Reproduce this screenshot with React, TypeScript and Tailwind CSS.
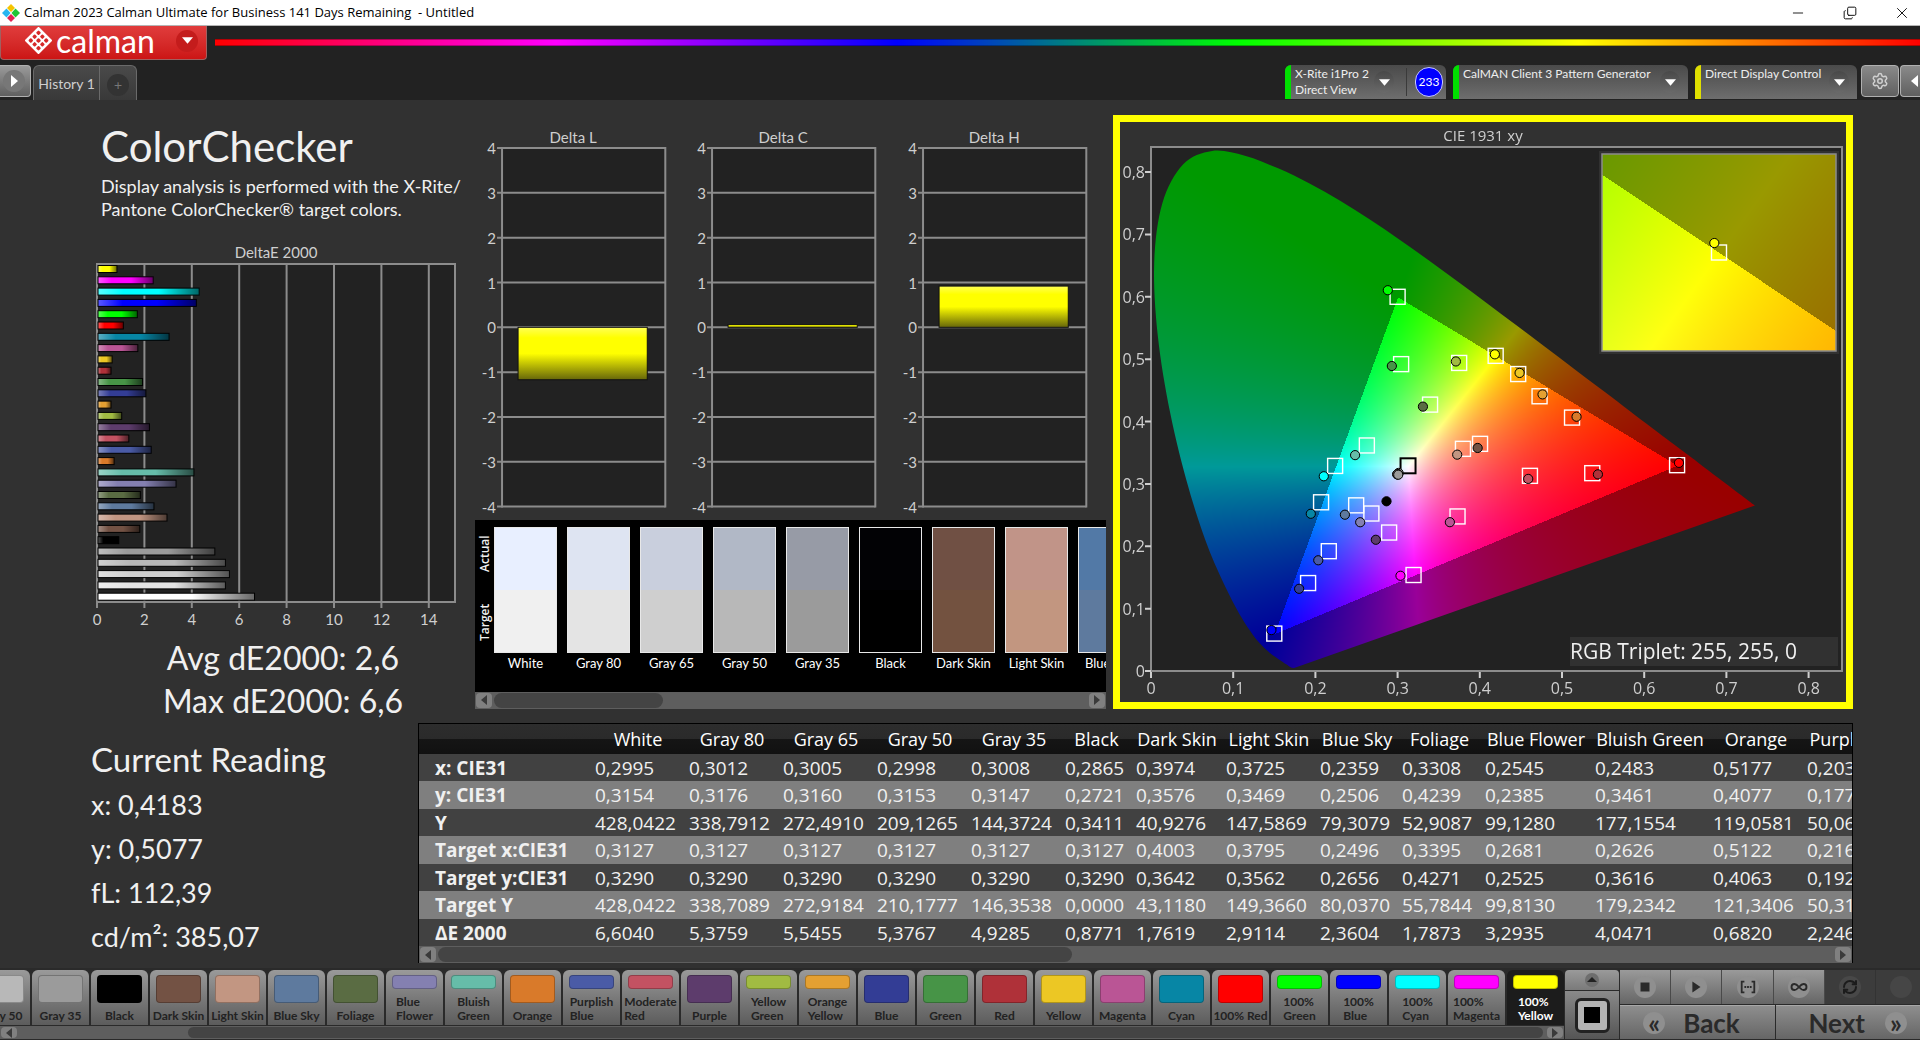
import { useEffect, useRef } from 'react';
import type { ReactNode } from 'react';
import { Minus, X, Copy, Settings, RefreshCw, Infinity as InfinityIcon } from 'lucide-react';

interface Patch {
  name: string;
  color: string;
  dE: number;
  actual: [number, number];
  target: [number, number];
}

const patches: Patch[] = [
  { name: 'White', color: '#ffffff', dE: 6.604, actual: [0.2995, 0.3154], target: [0.3127, 0.329] },
  { name: 'Gray 80', color: '#e4e4e4', dE: 5.3759, actual: [0.3012, 0.3176], target: [0.3127, 0.329] },
  { name: 'Gray 65', color: '#cfcfcf', dE: 5.5455, actual: [0.3005, 0.316], target: [0.3127, 0.329] },
  { name: 'Gray 50', color: '#b8b8b8', dE: 5.3767, actual: [0.2998, 0.3153], target: [0.3127, 0.329] },
  { name: 'Gray 35', color: '#9b9b9b', dE: 4.9285, actual: [0.3008, 0.3147], target: [0.3127, 0.329] },
  { name: 'Black', color: '#000000', dE: 0.8771, actual: [0.2865, 0.2721], target: [0.3127, 0.329] },
  { name: 'Dark Skin', color: '#735244', dE: 1.7619, actual: [0.3974, 0.3576], target: [0.4003, 0.3642] },
  { name: 'Light Skin', color: '#c29682', dE: 2.9114, actual: [0.3725, 0.3469], target: [0.3795, 0.3562] },
  { name: 'Blue Sky', color: '#5e7a9e', dE: 2.3604, actual: [0.2359, 0.2506], target: [0.2496, 0.2656] },
  { name: 'Foliage', color: '#5a6c43', dE: 1.7873, actual: [0.3308, 0.4239], target: [0.3395, 0.4271] },
  { name: 'Blue Flower', color: '#8480b1', dE: 3.2935, actual: [0.2545, 0.2385], target: [0.2681, 0.2525] },
  { name: 'Bluish Green', color: '#66bda9', dE: 4.0471, actual: [0.2483, 0.3461], target: [0.2626, 0.3616] },
  { name: 'Orange', color: '#d97a2a', dE: 0.682, actual: [0.5177, 0.4077], target: [0.5122, 0.4063] },
  { name: 'Purplish Blue', color: '#4a5ba6', dE: 2.246, actual: [0.2035, 0.1775], target: [0.2163, 0.1921] },
  { name: 'Moderate Red', color: '#c35262', dE: 1.3, actual: [0.4589, 0.308], target: [0.461, 0.3129] },
  { name: 'Purple', color: '#5d3c6c', dE: 2.17, actual: [0.2735, 0.2104], target: [0.2897, 0.222] },
  { name: 'Yellow Green', color: '#a1bb42', dE: 1.0, actual: [0.3709, 0.4963], target: [0.3749, 0.4939] },
  { name: 'Orange Yellow', color: '#e4a032', dE: 0.55, actual: [0.4763, 0.4435], target: [0.4727, 0.4405] },
  { name: 'Blue', color: '#333d95', dE: 2.02, actual: [0.1802, 0.1318], target: [0.1911, 0.141] },
  { name: 'Green', color: '#479447', dE: 1.88, actual: [0.293, 0.489], target: [0.3043, 0.492] },
  { name: 'Red', color: '#af3139', dE: 0.55, actual: [0.5437, 0.3153], target: [0.5368, 0.3172] },
  { name: 'Yellow', color: '#ecc724', dE: 0.6, actual: [0.4484, 0.4779], target: [0.4467, 0.4761] },
  { name: 'Magenta', color: '#ba5595', dE: 1.68, actual: [0.3636, 0.2386], target: [0.3729, 0.2478] },
  { name: 'Cyan', color: '#0786a5', dE: 3.0, actual: [0.1944, 0.2521], target: [0.2069, 0.2705] },
  { name: '100% Red', color: '#ff0000', dE: 1.07, actual: [0.6423, 0.3337], target: [0.64, 0.33] },
  { name: '100% Green', color: '#00ff00', dE: 1.66, actual: [0.2881, 0.6105], target: [0.3, 0.6] },
  { name: '100% Blue', color: '#0000ff', dE: 4.15, actual: [0.1465, 0.0656], target: [0.15, 0.06] },
  { name: '100% Cyan', color: '#00ffff', dE: 4.27, actual: [0.2102, 0.3122], target: [0.224, 0.3288] },
  { name: '100% Magenta', color: '#ff00ff', dE: 2.33, actual: [0.3035, 0.1527], target: [0.3194, 0.1539] },
  { name: '100% Yellow', color: '#ffff00', dE: 0.8, actual: [0.4183, 0.5077], target: [0.4193, 0.5053] },
];

const swatches = [
  { name: 'White', actual: '#e8efff', target: '#f0f0f0' },
  { name: 'Gray 80', actual: '#dee4f2', target: '#e4e4e4' },
  { name: 'Gray 65', actual: '#c9cfdd', target: '#cfcfcf' },
  { name: 'Gray 50', actual: '#b1b8c6', target: '#b8b8b8' },
  { name: 'Gray 35', actual: '#979ba6', target: '#9b9b9b' },
  { name: 'Black', actual: '#020205', target: '#000000' },
  { name: 'Dark Skin', actual: '#705044', target: '#735240' },
  { name: 'Light Skin', actual: '#c19488', target: '#c29680' },
  { name: 'Blue Sky', actual: '#5279a6', target: '#5e7a9e' },
];

const columns = [
  { name: 'White', width: 94 },
  { name: 'Gray 80', width: 94 },
  { name: 'Gray 65', width: 94 },
  { name: 'Gray 50', width: 94 },
  { name: 'Gray 35', width: 94 },
  { name: 'Black', width: 71 },
  { name: 'Dark Skin', width: 90 },
  { name: 'Light Skin', width: 94 },
  { name: 'Blue Sky', width: 82 },
  { name: 'Foliage', width: 83 },
  { name: 'Blue Flower', width: 110 },
  { name: 'Bluish Green', width: 118 },
  { name: 'Orange', width: 94 },
  { name: 'Purplish Blue', width: 124 },
];

const rows = [
  { label: 'x: CIE31', values: ['0,2995', '0,3012', '0,3005', '0,2998', '0,3008', '0,2865', '0,3974', '0,3725', '0,2359', '0,3308', '0,2545', '0,2483', '0,5177', '0,2035'] },
  { label: 'y: CIE31', values: ['0,3154', '0,3176', '0,3160', '0,3153', '0,3147', '0,2721', '0,3576', '0,3469', '0,2506', '0,4239', '0,2385', '0,3461', '0,4077', '0,1775'] },
  { label: 'Y', values: ['428,0422', '338,7912', '272,4910', '209,1265', '144,3724', '0,3411', '40,9276', '147,5869', '79,3079', '52,9087', '99,1280', '177,1554', '119,0581', '50,0612'] },
  { label: 'Target x:CIE31', values: ['0,3127', '0,3127', '0,3127', '0,3127', '0,3127', '0,3127', '0,4003', '0,3795', '0,2496', '0,3395', '0,2681', '0,2626', '0,5122', '0,2163'] },
  { label: 'Target y:CIE31', values: ['0,3290', '0,3290', '0,3290', '0,3290', '0,3290', '0,3290', '0,3642', '0,3562', '0,2656', '0,4271', '0,2525', '0,3616', '0,4063', '0,1921'] },
  { label: 'Target Y', values: ['428,0422', '338,7089', '272,9184', '210,1777', '146,3538', '0,0000', '43,1180', '149,3660', '80,0370', '55,7844', '99,8130', '179,2342', '121,3406', '50,3140'] },
  { label: 'ΔE 2000', values: ['6,6040', '5,3759', '5,5455', '5,3767', '4,9285', '0,8771', '1,7619', '2,9114', '2,3604', '1,7873', '3,2935', '4,0471', '0,6820', '2,2460'] },
];

const readings = ['x: 0,4183', 'y: 0,5077', 'fL: 112,39', 'cd/m²: 385,07'];

// Spectral locus of the 1931 observer, 380 nm to 700 nm
const locus: [number, number][] = [
  [0.1741, 0.005], [0.1733, 0.0048], [0.1714, 0.0051], [0.1689, 0.0069], [0.1644, 0.0109], [0.1611, 0.0138],
  [0.1566, 0.0177], [0.151, 0.0227], [0.144, 0.0297], [0.1355, 0.0399], [0.1241, 0.0578], [0.1096, 0.0868],
  [0.0913, 0.1327], [0.0687, 0.2007], [0.0454, 0.295], [0.0235, 0.4127], [0.0082, 0.5384], [0.0039, 0.6548],
  [0.0139, 0.7502], [0.0389, 0.812], [0.0743, 0.8338], [0.1142, 0.8262], [0.1547, 0.8059], [0.1929, 0.7816],
  [0.2296, 0.7543], [0.2658, 0.7243], [0.3016, 0.6923], [0.3373, 0.6589], [0.3731, 0.6245], [0.4087, 0.5896],
  [0.4441, 0.5547], [0.4788, 0.5202], [0.5125, 0.4866], [0.5448, 0.4544], [0.5752, 0.4242], [0.6029, 0.3965],
  [0.627, 0.3725], [0.6482, 0.3514], [0.6658, 0.334], [0.6915, 0.3083], [0.7347, 0.2653],
];

const CIE_W = 726;
const CIE_H = 580;
const plot = { left: 31, right: 722, top: 25, bottom: 549 };
const inset = { left: 482, top: 32, width: 234, height: 197 };
const insetCenter = { x: 0.4193, y: 0.5053, span: 0.05 };

const cieX = (x: number) => plot.left + x * 822;
const cieY = (y: number) => plot.bottom - y * 623.7;
const insetX = (x: number) => inset.left + inset.width / 2 + ((x - insetCenter.x) / insetCenter.span) * inset.width;
const insetY = (y: number) => inset.top + inset.height / 2 - ((y - insetCenter.y) / insetCenter.span) * inset.height;

function chromaticityColor(x: number, y: number) {
  const X = x / y;
  const Z = (1 - x - y) / y;
  const rgb = [
    3.2406 * X - 1.5372 - 0.4986 * Z,
    -0.9689 * X + 1.8758 + 0.0415 * Z,
    0.0557 * X - 0.204 + 1.057 * Z,
  ];
  const inGamut = Math.min(...rgb) >= 0;
  const max = Math.max(...rgb);
  return rgb.map((c) => (Math.max(0, c) / max) * (inGamut ? 255 : 153));
}

function renderField(width: number, height: number, toXY: (px: number, py: number) => [number, number]) {
  const canvas = document.createElement('canvas');
  canvas.width = width;
  canvas.height = height;
  const ctx = canvas.getContext('2d')!;
  const image = ctx.createImageData(width, height);
  for (let py = 0; py < height; py++) {
    for (let px = 0; px < width; px++) {
      const [x, y] = toXY(px, py);
      const [r, g, b] = chromaticityColor(x, Math.max(y, 0.001));
      image.data.set([r, g, b, 255], (py * width + px) * 4);
    }
  }
  ctx.putImageData(image, 0, 0);
  return canvas;
}

// Catmull-Rom through the sampled locus, closed by the purple line
function traceLocus(ctx: CanvasRenderingContext2D) {
  const pts = locus.map(([x, y]) => [cieX(x), cieY(y)]);
  ctx.beginPath();
  ctx.moveTo(pts[0][0], pts[0][1]);
  for (let i = 0; i < pts.length - 1; i++) {
    const p0 = pts[Math.max(i - 1, 0)];
    const p1 = pts[i];
    const p2 = pts[i + 1];
    const p3 = pts[Math.min(i + 2, pts.length - 1)];
    ctx.bezierCurveTo(
      p1[0] + (p2[0] - p0[0]) / 6, p1[1] + (p2[1] - p0[1]) / 6,
      p2[0] - (p3[0] - p1[0]) / 6, p2[1] - (p3[1] - p1[1]) / 6,
      p2[0], p2[1],
    );
  }
  ctx.closePath();
}

function paintDiagram(ctx: CanvasRenderingContext2D) {
  ctx.fillStyle = '#222222';
  ctx.fillRect(plot.left, plot.top, plot.right - plot.left, plot.bottom - plot.top);

  const field = renderField(CIE_W, CIE_H, (px, py) => [(px - plot.left) / 822, (plot.bottom - py) / 623.7]);
  ctx.save();
  traceLocus(ctx);
  ctx.clip();
  ctx.drawImage(field, 0, 0);
  ctx.restore();

  ctx.fillStyle = '#313131';
  ctx.fillRect(inset.left - 3, inset.top - 3, inset.width + 6, inset.height + 6);
  const detail = renderField(inset.width, inset.height, (px, py) => [
    insetCenter.x + (px / inset.width - 0.5) * insetCenter.span,
    insetCenter.y - (py / inset.height - 0.5) * insetCenter.span,
  ]);
  ctx.drawImage(detail, inset.left, inset.top);
}

const chartFont = '"Open Sans", sans-serif';

const DeltaEChart = () => {
  const x = (v: number) => 10 + v * 23.7;
  const bars = [...patches].reverse();

  return (
    <svg viewBox="0 0 388 390" className="w-full font-['Lato',sans-serif]" role="img" aria-label="DeltaE 2000">
      <defs>
        <linearGradient id="sheen-x" x1="0" x2="1" y1="0" y2="0">
          <stop offset="0" stopColor="#fff" stopOpacity="0.35" />
          <stop offset="0.25" stopColor="#fff" stopOpacity="0" />
          <stop offset="0.6" stopColor="#000" stopOpacity="0" />
          <stop offset="1" stopColor="#000" stopOpacity="0.6" />
        </linearGradient>
      </defs>
      <text x="189" y="19" textAnchor="middle" fontSize="15" fill="#cfcfcf">DeltaE 2000</text>
      <rect x="10" y="25" width="358" height="338" fill="#222222" stroke="#8c8c8c" strokeWidth="2" />
      {[0, 2, 4, 6, 8, 10, 12, 14].map((v) => (
        <g key={v}>
          <line x1={x(v)} x2={x(v)} y1="25" y2="369" stroke="#8c8c8c" strokeWidth="2" />
          <text x={x(v)} y="386" textAnchor="middle" fontSize="15" fill="#cfcfcf">{v}</text>
        </g>
      ))}
      {bars.map((bar, i) => (
        <g key={bar.name} strokeWidth="1">
          <rect x="11" y={26.5 + i * 11.3} width={bar.dE * 23.7} height="7" fill={bar.color} />
          <rect x="11" y={26.5 + i * 11.3} width={bar.dE * 23.7} height="7" fill="url(#sheen-x)" stroke="#000" />
        </g>
      ))}
    </svg>
  );
};

const DeltaChart = ({ title, value }: { title: string; value: number }) => {
  const y = (v: number) => 203 - v * 44.75;
  const top = Math.min(y(value), y(0));

  return (
    <svg viewBox="0 0 210 391" className="w-full font-['Lato',sans-serif]" role="img" aria-label={title}>
      <defs>
        <linearGradient id="yellow-bar" x1="0" x2="0" y1="0" y2="1">
          <stop offset="0" stopColor="#ffff55" />
          <stop offset="0.2" stopColor="#ffff00" />
          <stop offset="0.5" stopColor="#ffff00" />
          <stop offset="1" stopColor="#66660a" />
        </linearGradient>
      </defs>
      <text x="98" y="19" textAnchor="middle" fontSize="15" fill="#cfcfcf">{title}</text>
      <rect x="27" y="24" width="163" height="358" fill="#222222" />
      {[4, 3, 2, 1, 0, -1, -2, -3, -4].map((v) => (
        <g key={v}>
          <line x1="22" x2="190" y1={y(v)} y2={y(v)} stroke="#8c8c8c" strokeWidth="2" />
          <text x="21" y={y(v) + 6} textAnchor="end" fontSize="15" fill="#cfcfcf">{v}</text>
        </g>
      ))}
      <path d="M27 23V383M190 23V383" stroke="#8c8c8c" strokeWidth="2" />
      <rect x="43" y={top} width="129" height={Math.abs(y(value) - y(0))} fill="url(#yellow-bar)" stroke="#111" strokeWidth="1" />
    </svg>
  );
};

const CieChart = () => {
  const canvasRef = useRef<HTMLCanvasElement>(null);

  useEffect(() => {
    const ctx = canvasRef.current?.getContext('2d');
    if (ctx) paintDiagram(ctx);
  }, []);

  return (
    <div className="grid border-[7px] border-[#ffff00]">
      <canvas ref={canvasRef} width={CIE_W} height={CIE_H} className="w-full [grid-area:1/1]" />
      <svg viewBox="0 0 726 580" className="w-full [grid-area:1/1]" fontFamily={chartFont} role="img" aria-label="CIE 1931 xy">
        <text x="363" y="19" textAnchor="middle" fontSize="15" fill="#cfcfcf">CIE 1931 xy</text>
        <rect x={plot.left} y={plot.top} width={plot.right - plot.left} height={plot.bottom - plot.top} fill="none" stroke="#8c8c8c" strokeWidth="2" />
        {[0, 1, 2, 3, 4, 5, 6, 7, 8].map((v) => (
          <g key={v} stroke="#cfcfcf">
            <path d={`M${cieX(v / 10)} 550v6M25 ${cieY(v / 10)}h6`} strokeWidth="2" />
            <g fill="#cfcfcf" stroke="none" fontSize="16">
              <text x={cieX(v / 10)} y="572" textAnchor="middle">{v ? `0,${v}` : 0}</text>
              <text x="25" y={cieY(v / 10) + 6} textAnchor="end">{v ? `0,${v}` : 0}</text>
            </g>
          </g>
        ))}
        <g fill="none" stroke="#fff" strokeWidth="1.4">
          {patches.slice(6).map((p) => (
            <rect key={p.name} x={cieX(p.target[0]) - 7.5} y={cieY(p.target[1]) - 7.5} width="15" height="15" />
          ))}
          <rect x={cieX(0.3127) - 7.5} y={cieY(0.329) - 7.5} width="15" height="15" stroke="#000" strokeWidth="2" />
        </g>
        <g stroke="#000" strokeWidth="1">
          {patches.map((p) => (
            <circle key={p.name} cx={cieX(p.actual[0])} cy={cieY(p.actual[1])} r="4.6" fill={p.name === 'White' ? '#999' : p.color} />
          ))}
        </g>
        <rect x={inset.left} y={inset.top} width={inset.width} height={inset.height} fill="none" stroke="#8c8c8c" strokeWidth="1.5" />
        <rect x={insetX(0.4193) - 7.5} y={insetY(0.5053) - 7.5} width="15" height="15" fill="none" stroke="#fff" strokeWidth="1.4" />
        <circle cx={insetX(0.4183)} cy={insetY(0.5077)} r="4.6" fill="#ffff00" stroke="#000" />
        <rect x="450" y="515" width="268" height="29" fill="#313131" />
        <text x="450" y="537" fontSize="21" fill="#f0f0f0">RGB Triplet: 255, 255, 0</text>
      </svg>
    </div>
  );
};

const ScrollArrow = ({ dir }: { dir: 'left' | 'right' }) => (
  <button aria-label={`Scroll ${dir}`} className="flex h-full w-4 shrink-0 items-center justify-center rounded-sm bg-[#808080]">
    <svg viewBox="0 0 8 10" className="h-[10px] w-2">
      <path d={dir === 'left' ? 'M7 0v10L1 5z' : 'M1 0v10l6-5z'} fill="#3a3a3a" />
    </svg>
  </button>
);

const ScrollBar = ({ before, thumb, after, height = 'h-[17px]' }: { before: number; thumb: number; after: number; height?: string }) => (
  <div className={`flex gap-[2px] bg-[#5e5e5e] p-px ${height}`}>
    <ScrollArrow dir="left" />
    <div className="flex min-w-0 flex-1">
      <div style={{ flexGrow: before }} />
      <div className="rounded-full bg-[#444444]" style={{ flexGrow: thumb }} />
      <div style={{ flexGrow: after }} />
    </div>
    <ScrollArrow dir="right" />
  </div>
);

const RoundArrow = () => (
  <span className="flex h-[22px] w-5 items-center justify-center rounded-full bg-gradient-to-b from-[#484848] to-[#6a6a6a]">
    <svg viewBox="0 0 12 7" className="h-[7px] w-[11px]">
      <path d="M0 0h12L6 7z" fill="#fff" />
    </svg>
  </span>
);

const TitleBar = () => (
  <div className="flex h-[26px] items-center justify-between border-b border-[#b5b5b5] bg-white font-['Open_Sans',sans-serif] text-black">
    <div className="flex items-center gap-1 pl-[2px] text-[13px]">
      <svg viewBox="0 0 18 18" className="h-[18px] w-[18px]">
        <path d="M9 0l4 4-4 4-4-4z" fill="#f5c400" />
        <path d="M4.500 4.500l4 4.500-4 4.500L0 9z" fill="#29b5f0" />
        <path d="M13.500 4.500L18 9l-4.500 4.500L9.500 9z" fill="#1fc735" />
        <path d="M9 10l4 4-4 4-4-4z" fill="#e32353" />
      </svg>
      <span className="whitespace-pre">Calman 2023 Calman Ultimate for Business 141 Days Remaining  - Untitled</span>
    </div>
    <div className="flex items-center gap-4">
      <button aria-label="Minimize" className="flex w-9 justify-center"><Minus className="h-4 w-4" strokeWidth={1.3} /></button>
      <button aria-label="Restore" className="flex w-9 justify-center"><Copy className="h-[14px] w-[14px] -scale-x-100 rotate-180" strokeWidth={1.6} /></button>
      <button aria-label="Close" className="flex w-9 justify-center"><X className="h-[18px] w-[18px]" strokeWidth={1.2} /></button>
    </div>
  </div>
);

const BrandBar = () => (
  <div className="flex items-start gap-2 pb-[5px]">
    <button className="flex h-[34px] w-[207px] items-center rounded-b border border-t-0 border-[#a06060] bg-gradient-to-b from-[#e03c3c] to-[#cc1414] pb-1 pl-6 text-white">
      <svg viewBox="0 0 28 28" className="h-[27px] w-[27px]">
        <path d="M14 1l13 13-13 13L1 14z" fill="#fff" stroke="#fff" strokeWidth="2" strokeLinejoin="round" />
        <g fill="#d62828">
          {[[14, 6], [10, 10], [18, 10], [6, 14], [14, 14], [22, 14], [10, 18], [18, 18], [14, 22]].map(([x, y]) => (
            <rect key={`${x}-${y}`} x={x - 1.9} y={y - 1.9} width="3.800" height="3.800" rx="1" transform={`rotate(45 ${x} ${y})`} />
          ))}
        </g>
      </svg>
      <span className="w-[117px] pl-1 text-left font-['Lato',sans-serif] text-[32px] leading-[30px]">calman</span>
      <span className="ml-[7px] flex h-[22px] w-[22px] items-center justify-center rounded-full bg-[#c41c1c]">
        <svg viewBox="0 0 12 7" className="h-[7px] w-[11px]"><path d="M0 0h12L6 7z" fill="#fff" /></svg>
      </span>
    </button>
    <div className="mt-[13px] h-[7px] flex-1 border-y border-black/30 bg-[linear-gradient(to_right,#ff0000_0%,#ff00ff_20%,#0000ff_40%,#00ff00_60%,#ffff00_80%,#ff0000_100%)]" />
  </div>
);

const DeviceTab = ({ lines, strip, children, className }: { lines: string[]; strip: string; children?: ReactNode; className: string }) => (
  <div className={`flex h-[34px] overflow-hidden rounded-t-md bg-gradient-to-b from-[#4a4a4a] to-[#6e6e6e] ${className}`}>
    <span className={`w-[6px] shrink-0 ${strip}`} />
    <button className={`flex flex-1 items-center justify-between pl-1 text-left ${children ? 'pr-3' : 'pr-2'}`}>
      <span className="flex h-full flex-col pt-px text-xs leading-4 whitespace-nowrap text-[#eeeeee]">
        {lines.map((line) => (
          <span key={line}>{line}</span>
        ))}
      </span>
      <RoundArrow />
    </button>
    {children}
  </div>
);

const TabBar = () => (
  <div className="flex h-[35px] items-start justify-between font-['Lato',sans-serif]">
    <div className="flex">
      <button aria-label="Expand" className="flex h-8 w-[31px] items-center rounded-r border border-l-0 border-[#b0b0b0] bg-gradient-to-b from-[#9a9a9a] to-[#606060] pl-[3px]">
        <span className="flex h-[22px] w-[22px] items-center justify-center rounded-full bg-[#777777]">
          <svg viewBox="0 0 7 12" className="h-3 w-[7px]"><path d="M0 0v12l7-6z" fill="#fff" /></svg>
        </span>
      </button>
      <div className="ml-[2px] flex h-[35px] rounded-t-md border border-b-0 border-[#6a6a6a] bg-gradient-to-b from-[#4a4a4a] to-[#393939]">
        <button className="w-[66px] border-r border-[#6a6a6a] pt-px text-sm whitespace-nowrap text-[#cfcfcf]">History 1</button>
        <button aria-label="Add history" className="flex w-[36px] items-center justify-center pt-[3px]">
          <span className="flex h-[22px] w-[22px] items-center justify-center rounded-full bg-[#333333] text-sm text-[#777777]">+</span>
        </button>
      </div>
    </div>
    <div className="flex gap-[7px]">
      <DeviceTab lines={['X-Rite i1Pro 2', 'Direct View']} strip="bg-[#00e000]" className="w-[161px]">
        <span className="my-[3px] flex items-center border-l border-[#3a3a3a] pr-[3px] pl-2">
          <span className="flex h-[30px] w-7 items-center justify-center rounded-full border border-[#c8c8ff] bg-[#0000ff] text-xs text-white">233</span>
        </span>
      </DeviceTab>
      <DeviceTab lines={['CalMAN Client 3 Pattern Generator']} strip="bg-[#00e000]" className="w-[235px]" />
      <DeviceTab lines={['Direct Display Control']} strip="bg-[#e0e000]" className="w-[162px]" />
      <div className="-ml-[3px] flex gap-px">
        <button aria-label="Settings" className="flex h-8 w-[38px] items-center justify-center rounded border border-[#b0b0b0] bg-gradient-to-b from-[#8a8a8a] to-[#606060] text-[#d0d0d0]">
          <Settings className="h-[18px] w-[18px]" />
        </button>
        <button aria-label="Collapse" className="flex h-8 w-5 items-center justify-center rounded-l border border-r-0 border-[#b0b0b0] bg-gradient-to-b from-[#8a8a8a] to-[#606060] pl-2">
          <svg viewBox="0 0 7 12" className="h-3 w-[7px]"><path d="M7 0v12L0 6z" fill="#fff" /></svg>
        </button>
      </div>
    </div>
  </div>
);

const SwatchStrip = () => (
  <div className="mt-1">
    <div className="flex h-[172px] overflow-hidden bg-black">
      <div className="flex w-[19px] shrink-0 flex-col items-center justify-center pb-9 font-['Open_Sans',sans-serif] text-xs leading-4 font-semibold text-[#f0f0f0]">
        <span className="flex h-[68px] rotate-180 items-center justify-center [writing-mode:vertical-rl]">Actual</span>
        <span className="flex h-[68px] rotate-180 items-center justify-center [writing-mode:vertical-rl]">Target</span>
      </div>
      <div className="flex gap-[10px] pt-[7px]">
        {swatches.map((s) => (
          <div key={s.name} className="w-[63px] shrink-0 text-center font-['Lato',sans-serif] text-[13px] leading-5 whitespace-nowrap text-white">
            <div className="flex h-[126px] flex-col border border-[#e8e8e8]">
              <div className="flex-1" style={{ backgroundColor: s.actual }} />
              <div className="flex-1" style={{ backgroundColor: s.target }} />
            </div>
            {s.name}
          </div>
        ))}
      </div>
    </div>
    <ScrollBar before={0} thumb={169} after={424} />
  </div>
);

const ResultsTable = () => (
  <div className="min-w-0 flex-1 overflow-hidden border-x border-t border-black">
    <div className="overflow-hidden">
      <table className="w-[1508px] table-fixed border-collapse font-['Open_Sans',sans-serif] whitespace-nowrap text-[#f0f0f0]">
        <colgroup>
          <col className="w-[172px]" />
          {columns.map((c) => (
            <col key={c.name} style={{ width: c.width }} />
          ))}
        </colgroup>
        <thead>
          <tr className="h-[30px] bg-[linear-gradient(#2d2d2d_0,#2a2a2a_50%,#151515_50%,#111111_100%)] text-lg leading-5 text-white">
            <td />
            {columns.map((c) => (
              <th key={c.name} scope="col" className="font-normal">{c.name}</th>
            ))}
          </tr>
        </thead>
        <tbody className="text-[19px] leading-6">
          {rows.map((row, i) => (
            <tr key={row.label} className={i % 2 ? 'h-7 bg-[#7f7f7f]' : 'h-[27px] bg-[#414141]'}>
              <th scope="row" className="pl-4 text-left font-bold">{row.label}</th>
              {row.values.map((v, j) => (
                <td key={j} className="pl-1">{v}</td>
              ))}
            </tr>
          ))}
        </tbody>
      </table>
    </div>
    <ScrollBar before={0} thumb={634} after={761} />
  </div>
);

const PatchButton = ({ patch }: { patch: Patch }) => {
  const active = patch.name === '100% Yellow';
  const twoLines = patch.name.includes(' ') && !['Gray 50', 'Gray 35', 'Dark Skin', 'Light Skin', 'Blue Sky', '100% Red'].includes(patch.name);

  return (
    <button
      className={`flex h-[55px] w-[57px] shrink-0 flex-col items-center rounded-t-md pt-[5px] ${active
        ? 'bg-[#1c1c1c] text-white'
        : 'bg-gradient-to-b from-[#9a9a9a] to-[#5c5c5c] text-[#222222]'
        }`}
    >
      <span
        className={`w-[45px] shrink-0 rounded border border-black/25 ${twoLines ? 'h-[14px]' : 'h-7'}`}
        style={{ backgroundColor: patch.color }}
      />
      <span className={`flex flex-1 flex-col justify-end pb-[2px] text-left text-xs leading-[14px] font-bold ${twoLines ? '' : 'whitespace-nowrap'}`}>
        {twoLines ? patch.name.split(' ').map((word) => <span key={word}>{word}</span>) : patch.name}
      </span>
    </button>
  );
};

const controls = [
  { label: 'Stop', icon: <path d="M5 5h10v10H5z" /> },
  { label: 'Play', icon: <path d="M6 4v12l9-6z" /> },
  { label: 'Read series', icon: <path d="M6 4H3v12h3M14 4h3v12h-3M6 10h2M9 10h2M12 10h2" fill="none" stroke="#2a2a2a" strokeWidth="2" /> },
];

const controlClass = 'flex flex-1 items-center justify-center border-r border-[#4a4a4a] bg-gradient-to-b from-[#9a9a9a] to-[#666666] text-[#2a2a2a]';
const navClass = 'flex items-center border-t border-[#a8a8a8] bg-gradient-to-b from-[#8e8e8e] to-[#666666] text-[26px] leading-8 font-bold text-[#2a2a2a]';
const knobClass = 'flex h-[22px] w-[22px] items-center justify-center rounded-full bg-[#8f8f8f]';

const Footer = () => (
  <footer className="flex h-[72px] bg-[#2a2a2a] pt-[2px] font-['Lato',sans-serif]">
    <div className="flex min-w-0 flex-1 flex-col gap-px">
      <div className="flex justify-end gap-[2px] overflow-hidden">
        {patches.slice(3).map((p) => (
          <PatchButton key={p.name} patch={p} />
        ))}
      </div>
      <ScrollBar before={169} thumb={1356} after={2} height="h-[13px]" />
    </div>
    <div className="flex w-14 flex-col gap-px px-px pb-px">
      <button aria-label="Show more" className="flex h-5 items-center justify-center rounded-t bg-gradient-to-b from-[#9a9a9a] to-[#7a7a7a]">
        <svg viewBox="0 0 16 16" className="h-4 w-4"><circle cx="8" cy="8" r="7" fill="#6e6e6e" /><path d="M3 10h10L8 5z" fill="#222" /></svg>
      </button>
      <button aria-label="Pattern window" className="flex flex-1 items-center justify-center bg-gradient-to-b from-[#8a8a8a] to-[#555555]">
        <span className="flex h-[35px] w-[35px] items-center justify-center rounded-md border-[3px] border-[#222222] bg-[#b4b4b4]">
          <span className="h-4 w-4 bg-black" />
        </span>
      </button>
    </div>
    <div className="flex w-[300px] flex-col">
      <div className="flex h-[34px]">
        {controls.map((c) => (
          <button key={c.label} aria-label={c.label} className={controlClass}>
            <span className={knobClass}><svg viewBox="0 0 20 20" className="h-[18px] w-[18px]" fill="#2a2a2a">{c.icon}</svg></span>
          </button>
        ))}
        <button aria-label="Read continuous" className={controlClass}>
          <span className={knobClass}><InfinityIcon className="h-[18px] w-[18px]" strokeWidth={2.5} /></span>
        </button>
        <button aria-label="Refresh" className="flex flex-1 items-center justify-center border-r border-[#333333] bg-[#3c3c3c] text-[#1c1c1c]">
          <span className="flex h-[22px] w-[22px] items-center justify-center rounded-full bg-[#484848]"><RefreshCw className="h-4 w-4" strokeWidth={3} /></span>
        </button>
        <button aria-label="Options" className="flex w-11 items-center justify-center bg-[#3c3c3c] pl-[6px]">
          <span className="h-[22px] w-[22px] rounded-full bg-[#464646]" />
        </button>
      </div>
      <div className="flex flex-1 gap-px pt-px pb-px">
        <button className={`w-[155px] justify-center gap-[18px] pr-3 ${navClass}`}>
          <span className={knobClass}>«</span>
          Back
        </button>
        <button className={`flex-1 justify-end gap-5 pr-[13px] ${navClass}`}>
          Next
          <span className={knobClass}>»</span>
        </button>
      </div>
    </div>
  </footer>
);

const App = () => (
  <div className="flex min-h-screen flex-col overflow-hidden bg-[#313131]">
    <TitleBar />
    <header className="bg-[#222222]">
      <BrandBar />
      <TabBar />
    </header>
    <main className="flex flex-1 flex-col font-['Lato',sans-serif] text-[#f0f0f0]">
      <div className="grid h-[623px] grid-cols-[minmax(0,475fr)_minmax(0,638fr)_minmax(0,740fr)_minmax(0,67fr)]">
        <section className="pt-5 pl-[87px]">
          <h1 className="pl-[14px] text-[42px] leading-[52px]">ColorChecker</h1>
          <p className="pt-[3px] pl-[14px] text-lg leading-[23px] whitespace-nowrap">
            Display analysis is performed with the X-Rite/
            <br />
            Pantone ColorChecker® target colors.
          </p>
          <div className="mt-[18px]">
            <DeltaEChart />
          </div>
          <div className="pt-[7px] pl-1 text-center text-[32px] leading-[43px]">
            <p>Avg dE2000: 2,6</p>
            <p>Max dE2000: 6,6</p>
          </div>
        </section>
        <section className="pt-6 pr-[7px]">
          <div className="grid grid-cols-3">
            <DeltaChart title="Delta L" value={-1.17} />
            <DeltaChart title="Delta C" value={0.06} />
            <DeltaChart title="Delta H" value={0.92} />
          </div>
          <SwatchStrip />
        </section>
        <section className="pt-[15px]">
          <CieChart />
        </section>
      </div>
      <div className="flex items-start pr-[67px]">
        <section className="w-[418px] pt-[14px] pl-[91px] text-[27px] leading-[44px]">
          <h2 className="pb-[2px] text-[33px]">Current Reading</h2>
          {readings.map((r) => (
            <p key={r}>{r}</p>
          ))}
        </section>
        <ResultsTable />
      </div>
    </main>
    <Footer />
  </div>
);

export default App;
